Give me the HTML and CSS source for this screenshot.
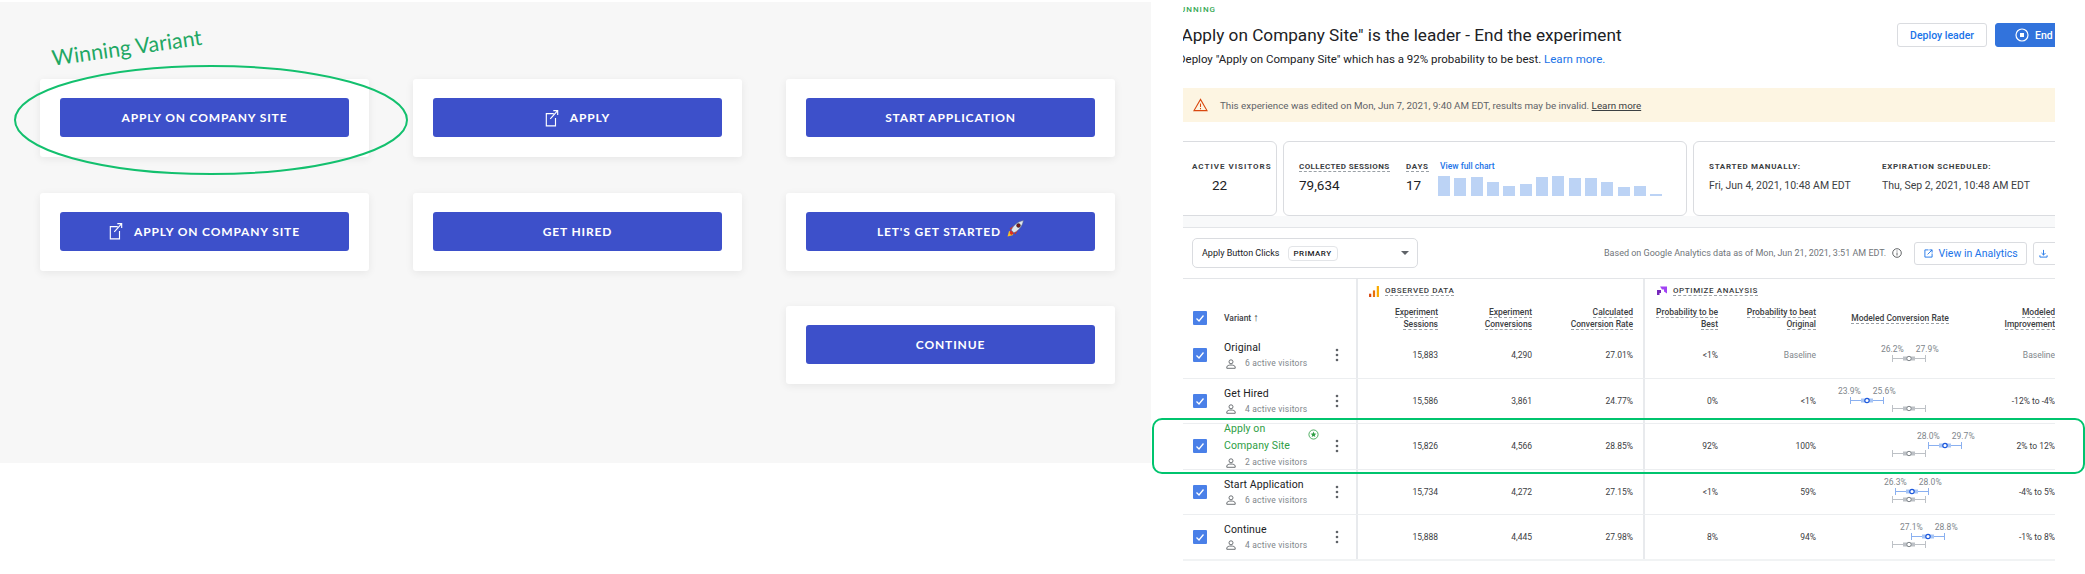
FILE: index.html
```html
<!DOCTYPE html>
<html>
<head>
  <meta charset="utf-8">
  <title>Experiment results</title>
  <link rel="stylesheet" href="styles.css">
</head>
<body>
  <!-- tested button variants -->
  <section class="variants">
    <div class="card"><a class="cta">APPLY ON COMPANY SITE</a></div>
    <div class="card"><a class="cta"><svg class="ext" viewBox="0 0 16 20"><path d="M10 5H1.500V19H12V10M6 11L14.500 1.500M9.500 1.500H14.500V6.500"/></svg>APPLY</a></div>
    <div class="card"><a class="cta">START APPLICATION</a></div>
    <div class="card"><a class="cta"><svg class="ext" viewBox="0 0 16 20"><path d="M10 5H1.500V19H12V10M6 11L14.500 1.500M9.500 1.500H14.500V6.500"/></svg>APPLY ON COMPANY SITE</a></div>
    <div class="card"><a class="cta">GET HIRED</a></div>
    <div class="card"><a class="cta">LET'S GET STARTED
      <svg class="rocket" viewBox="0 0 16 16">
        <path d="M.5 15.500L2 10L6 14Z" fill="#f7c325"/>
        <path d="M2.500 12.500L3.500 9.500L6.500 12.500L4 14Z" fill="#e0301e"/>
        <path d="M2.500 8L6.500 5.500L4.500 10ZM8 13.500L10.500 9.500L6 11.500Z" fill="#d9301f"/>
        <path d="M4 9.500C6 5 10 1.500 15.500 .5C14.500 6 11 10 6.500 12Z" fill="#dfe6ec" stroke="#5a6a8a" stroke-width=".5"/>
        <circle cx="10.800" cy="5.200" r="1.800" fill="#7a1c1c" stroke="#2b2b3a" stroke-width=".5"/>
      </svg></a></div>
    <div class="card card-last"><a class="cta">CONTINUE</a></div>
  </section>

  <!-- hand drawn annotation on the left picture -->
  <div class="winner-label">Winning Variant</div>
  <svg class="winner-ring" viewBox="0 0 396 112"><ellipse cx="198" cy="56" rx="196" ry="54"/></svg>

  <section class="report">
    <div class="status">RUNNING</div>
    <div class="title-row">
      <h1>"Apply on Company Site" is the leader - End the experiment</h1>
      <div class="title-actions">
        <a class="btn">Deploy leader</a>
        <a class="btn btn-end"><svg class="stop" viewBox="0 0 14 14"><circle cx="7" cy="7" r="6"/><rect x="5" y="5" width="4" height="4"/></svg>End</a>
      </div>
    </div>
    <p class="sub">Deploy "Apply on Company Site" which has a 92% probability to be best. <a>Learn more.</a></p>

    <div class="warn">
      <svg class="warn-icon" viewBox="0 0 16 14"><path d="M8 1L15 13H1Z"/><path d="M8 5.500V9M8 10.300V11.500"/></svg>
      <span>This experience was edited on Mon, Jun 7, 2021, 9:40 AM EDT, results may be invalid. <u>Learn more</u></span>
    </div>

    <div class="stats">
      <div class="stat stat-active">
        <div class="lbl lbl-active">ACTIVE VISITORS</div>
        <div class="big big-center">22</div>
      </div>
      <div class="stat stat-chart">
        <div class="stat-col stat-sessions">
          <div class="lbl lbl-sessions"><span class="dash">COLLECTED SESSIONS</span></div>
          <div class="big">79,634</div>
        </div>
        <div class="stat-col stat-days">
          <div class="lbl"><span class="dash">DAYS</span></div>
          <div class="big">17</div>
        </div>
        <div class="stat-col">
          <a class="chart-link">View full chart</a>
          <div class="bars">
            <i style="height:20px"></i><i style="height:18px"></i><i style="height:19px"></i><i style="height:14px"></i><i style="height:10px"></i><i style="height:12px"></i><i style="height:19px"></i><i style="height:20px"></i><i style="height:18px"></i><i style="height:18px"></i><i style="height:14px"></i><i style="height:9px"></i><i style="height:10px"></i><i style="height:2px"></i>
          </div>
        </div>
      </div>
      <div class="stat stat-dates">
        <div class="stat-col stat-start">
          <div class="lbl">STARTED MANUALLY:</div>
          <div class="date">Fri, Jun 4, 2021, 10:48 AM EDT</div>
        </div>
        <div class="stat-col">
          <div class="lbl">EXPIRATION SCHEDULED:</div>
          <div class="date">Thu, Sep 2, 2021, 10:48 AM EDT</div>
        </div>
      </div>
    </div>
    <div class="strip"></div>

    <div class="filter">
      <div class="select">
        <span>Apply Button Clicks</span><span class="chip">PRIMARY</span>
        <i class="caret"></i>
      </div>
      <div class="based">Based on Google Analytics data as of Mon, Jun 21, 2021, 3:51 AM EDT.</div>
      <svg class="info" viewBox="0 0 10 10"><circle cx="5" cy="5" r="4.300"/><path d="M5 4.500V7.500M5 2.500V3.500"/></svg>
      <a class="btn btn-analytics"><svg class="small-ic" viewBox="0 0 10 10"><path d="M5 1H1V9H9V5M4 6L9 1M6 1H9V4"/></svg>View in Analytics</a>
      <a class="btn btn-dl"><svg class="small-ic" viewBox="0 0 10 10"><path d="M5 1V6.500M2.800 4.500L5 6.700L7.200 4.500M1 7V9H9V7"/></svg></a>
    </div>

    <div class="grid head">
      <div class="cell-var"></div>
      <div class="section section-obs">
        <svg class="sec-ic" viewBox="0 0 9 10"><rect x="0" y="7" width="2" height="3" fill="#d9480f"/><rect x="3.500" y="4" width="2" height="6" fill="#e8710a"/><rect x="7" y="0" width="2" height="10" fill="#f9ab00"/></svg>
        <span class="dash">OBSERVED DATA</span>
      </div>
      <div class="section section-opt">
        <svg class="sec-ic" viewBox="0 0 10 10"><path d="M3 0H10V7L7 5V3H5Z" fill="#a142f4"/><path d="M0 3.500H4V6.500H2.500V8.500H0Z" fill="#7627bb"/></svg>
        <span class="dash">OPTIMIZE ANALYSIS</span>
      </div>
      <div class="cell-var">
        <span class="check"><svg viewBox="0 0 14 14"><path d="M3.500 7.500L6 10L10.500 4.500"/></svg></span>
        <span class="var-head">Variant <b>↑</b></span>
      </div>
      <div class="th"><span class="dash">Experiment</span><br><span class="dash">Sessions</span></div>
      <div class="th"><span class="dash">Experiment</span><br><span class="dash">Conversions</span></div>
      <div class="th th-end"><span class="dash">Calculated</span><br><span class="dash">Conversion Rate</span></div>
      <div class="th"><span class="dash">Probability to be</span><br><span class="dash">Best</span></div>
      <div class="th"><span class="dash">Probability to beat</span><br><span class="dash">Original</span></div>
      <div class="th th-center"><span class="dash">Modeled Conversion Rate</span></div>
      <div class="th"><span class="dash">Modeled</span><br><span class="dash">Improvement</span></div>
    </div>

    <div class="grid row">
      <div class="cell-var">
        <span class="check"><svg viewBox="0 0 14 14"><path d="M3.500 7.500L6 10L10.500 4.500"/></svg></span>
        <div class="var-info">
          <div class="var-name">Original</div>
          <div class="visitors"><svg class="person" viewBox="0 0 10 10"><circle cx="5" cy="2.800" r="2"/><path d="M.8 9.300V8C.8 6.700 3 6 5 6S9.200 6.700 9.200 8V9.300Z"/></svg>6 active visitors</div>
        </div>
        <svg class="kebab" viewBox="0 0 4 14"><circle cx="2" cy="2" r="1.300"/><circle cx="2" cy="7" r="1.300"/><circle cx="2" cy="12" r="1.300"/></svg>
      </div>
      <div class="td">15,883</div><div class="td">4,290</div><div class="td td-end">27.01%</div>
      <div class="td">&lt;1%</div><div class="td muted">Baseline</div>
      <div class="plot">
        <div class="pcts" style="margin-left:65px"><span>26.2%</span><span>27.9%</span></div>
        <svg class="whisker grey" style="margin-left:76px" viewBox="0 0 34 7"><path class="line" d="M.5 0V7M.5 3.500H33.500M33.500 0V7"/><rect x="11" y="1.500" width="12" height="4"/><circle cx="17" cy="3.500" r="2.200"/></svg>
      </div>
      <div class="td muted">Baseline</div>
    </div>

    <div class="grid row">
      <div class="cell-var">
        <span class="check"><svg viewBox="0 0 14 14"><path d="M3.500 7.500L6 10L10.500 4.500"/></svg></span>
        <div class="var-info">
          <div class="var-name">Get Hired</div>
          <div class="visitors"><svg class="person" viewBox="0 0 10 10"><circle cx="5" cy="2.800" r="2"/><path d="M.8 9.300V8C.8 6.700 3 6 5 6S9.200 6.700 9.200 8V9.300Z"/></svg>4 active visitors</div>
        </div>
        <svg class="kebab" viewBox="0 0 4 14"><circle cx="2" cy="2" r="1.300"/><circle cx="2" cy="7" r="1.300"/><circle cx="2" cy="12" r="1.300"/></svg>
      </div>
      <div class="td">15,586</div><div class="td">3,861</div><div class="td td-end">24.77%</div>
      <div class="td">0%</div><div class="td">&lt;1%</div>
      <div class="plot">
        <div class="pcts" style="margin-left:22px"><span>23.9%</span><span>25.6%</span></div>
        <svg class="whisker blue" style="margin-left:34px" viewBox="0 0 34 7"><path class="line" d="M.5 0V7M.5 3.500H33.500M33.500 0V7"/><rect x="11" y="1.500" width="12" height="4"/><circle cx="17" cy="3.500" r="2.200"/></svg>
        <svg class="whisker grey" style="margin-left:76px" viewBox="0 0 34 7"><path class="line" d="M.5 0V7M.5 3.500H33.500M33.500 0V7"/><rect x="11" y="1.500" width="12" height="4"/><circle cx="17" cy="3.500" r="2.200"/></svg>
      </div>
      <div class="td">-12% to -4%</div>
    </div>

    <div class="grid row row-win">
      <div class="cell-var">
        <span class="check"><svg viewBox="0 0 14 14"><path d="M3.500 7.500L6 10L10.500 4.500"/></svg></span>
        <div class="var-info">
          <div class="var-name win">
            <span>Apply on<br>Company Site</span>
            <svg class="star" viewBox="0 0 12 12"><circle cx="6" cy="6" r="5"/><path class="star-in" d="M6 2.800L6.900 5L9.200 5.100L7.400 6.500L8 8.800L6 7.500L4 8.800L4.600 6.500L2.800 5.100L5.100 5Z"/></svg>
          </div>
          <div class="visitors"><svg class="person" viewBox="0 0 10 10"><circle cx="5" cy="2.800" r="2"/><path d="M.8 9.300V8C.8 6.700 3 6 5 6S9.200 6.700 9.200 8V9.300Z"/></svg>2 active visitors</div>
        </div>
        <svg class="kebab" viewBox="0 0 4 14"><circle cx="2" cy="2" r="1.300"/><circle cx="2" cy="7" r="1.300"/><circle cx="2" cy="12" r="1.300"/></svg>
      </div>
      <div class="td">15,826</div><div class="td">4,566</div><div class="td td-end">28.85%</div>
      <div class="td">92%</div><div class="td">100%</div>
      <div class="plot">
        <div class="pcts" style="margin-left:101px"><span>28.0%</span><span>29.7%</span></div>
        <svg class="whisker blue" style="margin-left:112px" viewBox="0 0 34 7"><path class="line" d="M.5 0V7M.5 3.500H33.500M33.500 0V7"/><rect x="11" y="1.500" width="12" height="4"/><circle cx="17" cy="3.500" r="2.200"/></svg>
        <svg class="whisker grey" style="margin-left:76px" viewBox="0 0 34 7"><path class="line" d="M.5 0V7M.5 3.500H33.500M33.500 0V7"/><rect x="11" y="1.500" width="12" height="4"/><circle cx="17" cy="3.500" r="2.200"/></svg>
      </div>
      <div class="td">2% to 12%</div>
    </div>

    <div class="grid row">
      <div class="cell-var">
        <span class="check"><svg viewBox="0 0 14 14"><path d="M3.500 7.500L6 10L10.500 4.500"/></svg></span>
        <div class="var-info">
          <div class="var-name">Start Application</div>
          <div class="visitors"><svg class="person" viewBox="0 0 10 10"><circle cx="5" cy="2.800" r="2"/><path d="M.8 9.300V8C.8 6.700 3 6 5 6S9.200 6.700 9.200 8V9.300Z"/></svg>6 active visitors</div>
        </div>
        <svg class="kebab" viewBox="0 0 4 14"><circle cx="2" cy="2" r="1.300"/><circle cx="2" cy="7" r="1.300"/><circle cx="2" cy="12" r="1.300"/></svg>
      </div>
      <div class="td">15,734</div><div class="td">4,272</div><div class="td td-end">27.15%</div>
      <div class="td">&lt;1%</div><div class="td">59%</div>
      <div class="plot">
        <div class="pcts" style="margin-left:68px"><span>26.3%</span><span>28.0%</span></div>
        <svg class="whisker blue" style="margin-left:79px" viewBox="0 0 34 7"><path class="line" d="M.5 0V7M.5 3.500H33.500M33.500 0V7"/><rect x="11" y="1.500" width="12" height="4"/><circle cx="17" cy="3.500" r="2.200"/></svg>
        <svg class="whisker grey" style="margin-left:76px" viewBox="0 0 34 7"><path class="line" d="M.5 0V7M.5 3.500H33.500M33.500 0V7"/><rect x="11" y="1.500" width="12" height="4"/><circle cx="17" cy="3.500" r="2.200"/></svg>
      </div>
      <div class="td">-4% to 5%</div>
    </div>

    <div class="grid row row-last">
      <div class="cell-var">
        <span class="check"><svg viewBox="0 0 14 14"><path d="M3.500 7.500L6 10L10.500 4.500"/></svg></span>
        <div class="var-info">
          <div class="var-name">Continue</div>
          <div class="visitors"><svg class="person" viewBox="0 0 10 10"><circle cx="5" cy="2.800" r="2"/><path d="M.8 9.300V8C.8 6.700 3 6 5 6S9.200 6.700 9.200 8V9.300Z"/></svg>4 active visitors</div>
        </div>
        <svg class="kebab" viewBox="0 0 4 14"><circle cx="2" cy="2" r="1.300"/><circle cx="2" cy="7" r="1.300"/><circle cx="2" cy="12" r="1.300"/></svg>
      </div>
      <div class="td">15,888</div><div class="td">4,445</div><div class="td td-end">27.98%</div>
      <div class="td">8%</div><div class="td">94%</div>
      <div class="plot">
        <div class="pcts" style="margin-left:84px"><span>27.1%</span><span>28.8%</span></div>
        <svg class="whisker blue" style="margin-left:95px" viewBox="0 0 34 7"><path class="line" d="M.5 0V7M.5 3.500H33.500M33.500 0V7"/><rect x="11" y="1.500" width="12" height="4"/><circle cx="17" cy="3.500" r="2.200"/></svg>
        <svg class="whisker grey" style="margin-left:76px" viewBox="0 0 34 7"><path class="line" d="M.5 0V7M.5 3.500H33.500M33.500 0V7"/><rect x="11" y="1.500" width="12" height="4"/><circle cx="17" cy="3.500" r="2.200"/></svg>
      </div>
      <div class="td">-1% to 8%</div>
    </div>
  </section>

  <!-- green box drawn over the winning row -->
  <div class="winner-box"></div>
</body>
</html>
```

FILE: styles.css
```css
html, body {margin:0;padding:0;background:#fff;}
body {position:relative;display:flex;align-items:flex-start;width:2085px;height:574px;overflow:hidden;font-family:Roboto,"Liberation Sans",sans-serif;color:#202124;}

/* left picture */
.variants {box-sizing:border-box;flex:none;width:1151px;height:461px;margin-top:2px;padding:77px 0 0 40px;background:#f7f7f7;display:grid;grid-template-columns:repeat(3,329px);grid-auto-rows:78px;column-gap:44px;row-gap:35.5px;}
.card {box-sizing:border-box;padding:19px 20px;background:#fff;border-radius:3px;box-shadow:0 2px 8px rgba(0,0,0,.07);}
.card-last {grid-column:3;}
.cta {display:flex;align-items:center;justify-content:center;height:39px;background:#3d50ca;border-radius:3px;color:#fff;font-family:Lato,"Open Sans",sans-serif;font-size:12px;font-weight:700;letter-spacing:.85px;}
.ext {flex:none;width:14px;height:18px;margin-right:11px;fill:none;stroke:#fff;stroke-width:1.300;}
.rocket {flex:none;width:17px;height:17px;margin:-5px 0 0 6px;}

.winner-label {position:absolute;left:50px;top:45px;font-family:Lato,sans-serif;font-size:21.500px;color:#1fa864;transform:rotate(-8deg);transform-origin:left top;white-space:nowrap;}
.winner-ring {position:absolute;left:13px;top:64px;width:396px;height:112px;fill:none;stroke:#13c06e;stroke-width:2;}

/* right picture */
.report {box-sizing:border-box;flex:none;width:872px;height:574px;margin-left:32px;overflow:hidden;padding-top:5px;}
.status {height:9px;margin-left:-9px;font-size:8px;line-height:9px;font-weight:500;letter-spacing:1px;color:#34a853;}
.title-row {display:flex;justify-content:space-between;align-items:center;height:24px;margin-top:9px;}
h1 {margin:0 0 0 -6px;font-size:17.200px;font-weight:400;white-space:nowrap;}
.title-actions {display:flex;gap:8px;margin-right:-40px;}
.btn {box-sizing:border-box;display:flex;align-items:center;justify-content:center;height:24px;padding:0 12px;border:1px solid #dadce0;border-radius:3px;background:#fff;color:#1a73e8;font-size:10.500px;font-weight:500;white-space:nowrap;}
.btn-end {width:100px;justify-content:flex-start;padding-left:19px;background:#3273dc;border-color:#3273dc;color:#fff;}
.stop {flex:none;width:14px;height:14px;margin-right:6px;fill:none;stroke:#fff;stroke-width:1.200;}
.stop rect {fill:#fff;stroke:none;}
.sub {margin:5px 0 0 -5px;font-size:11.500px;line-height:14px;white-space:nowrap;}
.sub a {color:#1a73e8;}
.warn {display:flex;align-items:center;height:34px;margin-top:22px;background:#fdf5e2;font-size:9.800px;color:#5f6368;}
.warn-icon {flex:none;width:15px;height:14px;margin:0 12px 0 10px;fill:none;stroke:#d9480f;stroke-width:1.100;}
.warn u {color:#3c4043;}

.stats {display:flex;gap:6px;height:75px;margin-top:19px;}
.stat {box-sizing:border-box;display:flex;border:1px solid #dadce0;border-radius:6px;padding-top:19px;}
.stat-active {flex:none;width:104px;margin-left:-10px;padding-left:18px;display:block;}
.stat-chart {flex:none;width:404px;padding-left:15px;}
.stat-dates {flex:1;margin-right:-12px;padding-left:15px;}
.stat-sessions {width:107px;}
.stat-days {width:33px;}
.stat-start {width:173px;}
.lbl {font-size:8px;line-height:11px;font-weight:700;letter-spacing:.7px;color:#3c4043;white-space:nowrap;}
.lbl-active {letter-spacing:1px;}
.lbl-sessions {letter-spacing:.4px;}
.big {margin-top:4px;font-size:13.500px;line-height:18px;}
.big-center {margin-left:20px;}
.date {margin-top:7px;font-size:10.500px;line-height:14px;color:#3c4043;white-space:nowrap;}
.dash {border-bottom:1px dashed #9aa0a6;}
.chart-link {display:block;margin-left:1px;font-size:8.500px;line-height:11px;font-weight:500;color:#1a73e8;white-space:nowrap;}
.bars {display:flex;align-items:flex-end;gap:4.350px;height:20px;margin-top:4px;margin-left:-1px;}
.bars i {display:block;width:12px;background:#bcd3f5;}
.strip {height:11px;background:#f8f9fa;border-bottom:1px solid #e3e5e8;}

.filter {box-sizing:border-box;display:flex;align-items:center;height:51px;border-bottom:1px solid #e3e5e8;padding-left:9px;}
.select {box-sizing:border-box;position:relative;display:flex;align-items:center;flex:none;width:226px;height:30px;padding-left:9px;border:1px solid #dadce0;border-radius:5px;font-size:9px;}
.chip {margin-left:8px;padding:2px 5px;border:1px solid #e3e5e8;border-radius:4px;font-size:8px;font-weight:500;letter-spacing:.5px;}
.caret {position:absolute;right:8px;top:12px;border:4px solid transparent;border-top:4px solid #5f6368;border-bottom:0;}
.based {margin-left:186px;font-size:9px;color:#70757a;white-space:nowrap;}
.info {flex:none;width:10px;height:10px;margin-left:6px;fill:none;stroke:#3c4043;stroke-width:.8;}
.btn-analytics {flex:none;width:113px;height:23px;margin-left:12px;padding:0;font-size:10.500px;font-weight:400;}
.btn-dl {flex:none;width:34px;height:23px;margin-left:6px;padding:0 14px 0 0;}
.small-ic {flex:none;width:9px;height:9px;margin-right:6px;fill:none;stroke:#1a73e8;stroke-width:1;}
.btn-dl .small-ic {margin:0;}

/* results table */
.grid {display:grid;grid-template-columns:175px 80px 94px 113px 73px 98px 168px 71px;}
.head {grid-template-rows:24px 30px;font-size:8.500px;}
.section {display:flex;align-items:center;font-size:8px;font-weight:500;letter-spacing:.6px;color:#3c4043;}
.section-obs {grid-column:2 / 5;padding-left:11px;border-right:2px solid #e8eaed;}
.section-opt {grid-column:5 / 9;padding-left:12px;}
.sec-ic {flex:none;width:10px;height:11px;margin-right:6px;}
.cell-var {box-sizing:border-box;display:flex;align-items:center;padding-left:10px;border-right:2px solid #e8eaed;}
.check {flex:none;display:block;width:14px;height:14px;margin-right:17px;background:#4a80e8;border-radius:1px;}
.check svg {display:block;fill:none;stroke:#fff;stroke-width:1.300;}
.var-head {font-size:8.500px;font-weight:500;color:#3c4043;}
.var-head b {font-size:11px;line-height:8px;font-weight:700;}
.th {align-self:center;text-align:right;line-height:12px;font-weight:500;color:#3c4043;white-space:nowrap;}
.th-end {padding-right:10px;border-right:2px solid #e8eaed;align-self:stretch;padding-top:3px;}
.th-center {text-align:center;}
.row {height:45.500px;border-bottom:1px solid #eceef0;box-sizing:border-box;}
.row-last {border-bottom:2px solid #f1f3f4;}
.row-win {background:#fff;}
.row-win .var-info {margin-top:-4px;}
.var-info {flex:1;min-width:0;}
.var-name {font-size:10.500px;line-height:14px;letter-spacing:.1px;color:#202124;}
.var-name.win {display:flex;justify-content:space-between;align-items:center;width:95px;line-height:17px;color:#2e9e45;}
.visitors {display:flex;align-items:center;margin-top:3px;font-size:8.500px;line-height:11px;letter-spacing:.2px;color:#80868b;white-space:nowrap;}
.person {flex:none;width:10px;height:10px;margin:0 9px 0 2px;fill:none;stroke:#5f6368;stroke-width:.9;}
.kebab {flex:none;width:4px;height:14px;margin-right:17px;fill:#5f6368;}
.star {flex:none;width:11px;height:11px;margin-top:-5px;fill:none;stroke:#2e9e45;stroke-width:.9;}
.star-in {fill:#2e9e45;stroke:none;}
.td {align-self:center;text-align:right;font-size:8.500px;color:#3c4043;white-space:nowrap;}
.td-end {align-self:stretch;display:flex;align-items:center;justify-content:flex-end;padding-right:10px;border-right:2px solid #e8eaed;}
.muted {color:#80868b;}
.plot {display:flex;flex-direction:column;justify-content:center;padding-bottom:4px;}
.pcts {display:flex;gap:12px;font-size:8.500px;line-height:10px;color:#80868b;}
.whisker {display:block;width:34px;height:7px;margin-top:1px;fill:none;}
.grey .line {stroke:#bdc1c6;stroke-width:1;}
.grey rect {fill:#bdc1c6;}
.grey circle {fill:#fff;stroke:#80868b;stroke-width:1;}
.blue .line {stroke:#8ab0f0;stroke-width:1;}
.blue rect {fill:#a7c5f5;}
.blue circle {fill:#fff;stroke:#1a56db;stroke-width:1.200;}

.winner-box {box-sizing:border-box;position:absolute;left:1152px;top:418px;width:933px;height:56px;border:2px solid #00c46e;border-radius:10px;}
```
